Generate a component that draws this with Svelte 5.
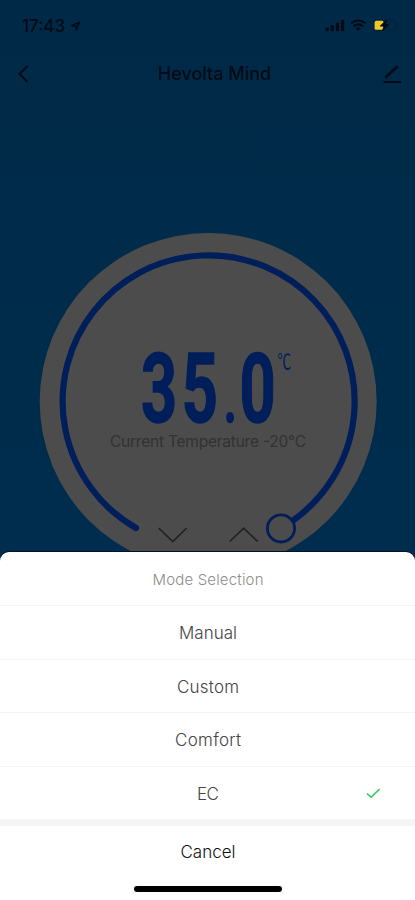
<script>
  const modes = [
    { name: 'Manual', width: 58 },
    { name: 'Custom', width: 62 },
    { name: 'Comfort', width: 66 },
    { name: 'EC', width: 22 }
  ];
  let selected = $state('EC');
</script>

<main class="screen">
  <header class="status">
    <div class="clock">
      <span>17:43</span>
      <svg width="11" height="11" viewBox="0 0 11 11"><path d="M1.5 4.6 9.5 1.2 6.4 9.4 5.6 5.4Z" fill="#010b16" fill-opacity=".4" stroke="#010b16" stroke-width="1.2" stroke-linejoin="round" /></svg>
    </div>
    <svg class="signals" width="76" height="14" viewBox="0 0 76 14">
      <g fill="#010b16">
        <rect x="0.5" y="8.5" width="3.2" height="3.8" rx="1" />
        <rect x="5.7" y="6" width="3.2" height="6.3" rx="1" />
        <rect x="10.9" y="3.5" width="3.2" height="8.8" rx="1" />
        <rect x="16" y="0.8" width="3.2" height="11.5" rx="1" />
        <path d="M30.6 9.2q2.6-2 5.2 0l-2.6 2.9Z" />
      </g>
      <path d="M26 4.5q7.3-6 14.6 0M28.4 7.3q4.8-3.8 9.6 0" fill="none" stroke="#010b16" stroke-width="2" />
      <rect x="48.6" y="1" width="22" height="10.6" rx="3" fill="none" stroke="#03213a" />
      <path d="M72.5 4.2q2 2 0 4" fill="none" stroke="#03213a" />
      <rect x="49.6" y="1.8" width="9" height="9" rx="1.6" fill="#f0c928" />
      <path d="m61.7 1-6.4 6h3.8l-1.5 4.6 6.4-6h-3.8Z" fill="#010b16" stroke="#010b16" />
    </svg>
  </header>

  <nav class="bar">
    <svg width="12" height="20" viewBox="0 0 12 20"><path d="m10.5 2-8 8 8 8" fill="none" stroke="#010b16" stroke-width="2" /></svg>
    <h1>Hevolta Mind</h1>
    <svg width="20" height="20" viewBox="0 0 20 20"><path d="M3.2 13.7 15.7 2.2" stroke="#010b16" stroke-width="2.8" /><path d="M1.5 18h17.5" stroke="#010b16" stroke-width="2" /></svg>
  </nav>

  <section class="dial">
    <svg width="415" height="452" viewBox="0 100 415 452">
      <circle cx="208.2" cy="401.5" r="168.5" fill="#4c4c4c" />
      <path d="M136 528A146 146 0 1 1 293 520.5" fill="none" stroke="#001e5a" stroke-width="6.2" stroke-linecap="round" />
      <circle cx="281" cy="528.4" r="13.6" fill="#4c4c4c" stroke="#001e5a" stroke-width="2.8" />
      <text class="value" transform="translate(0 422) scale(.65 1)" x="216.8 279.8 344.5 368.5">35<tspan class="point">.</tspan>0</text>
      <text class="unit" transform="translate(277.5 369) scale(.65 1)">℃</text>
      <text class="current" x="208" y="447" text-anchor="middle" textLength="196">Current Temperature -20°C</text>
      <path d="m158.7 528 14 13.5L186.7 528M229.7 541.5l14-13.3 14 13.3" fill="none" stroke="#222" stroke-width="1.7" />
    </svg>
  </section>

  <section class="sheet">
    <h2><svg width="120" height="24"><text x="60" y="17.5" text-anchor="middle" textLength="111">Mode Selection</text></svg></h2>
    {#each modes as mode}
      <button class="row" onclick={() => (selected = mode.name)}>
        <svg width="80" height="24"><text x="40" y="18.5" text-anchor="middle" textLength={mode.width}>{mode.name}</text></svg>
        {#if selected === mode.name}
          <svg class="check" width="15" height="12" viewBox="0 0 15 12"><path d="m1 5.6 4.2 3.6L13.5 1.2" fill="none" stroke="#3dcc62" stroke-width="1.6" /></svg>
        {/if}
      </button>
    {/each}
    <div class="gap"></div>
    <button class="cancel"><svg width="80" height="24"><text x="40" y="18" text-anchor="middle" textLength="55">Cancel</text></svg></button>
    <div class="home"></div>
  </section>
</main>

<style>
  :global(body) { margin: 0; }
  .screen {
    width: 415px;
    height: 900px;
    overflow: hidden;
    display: flex;
    flex-direction: column;
    font-family: Inter, "Liberation Sans", sans-serif;
    background: linear-gradient(#002947, #002c4b 350px, #002d4e 552px);
  }
  svg { display: block; flex: none; }
  .status {
    height: 52px;
    box-sizing: border-box;
    padding: 0 14px 0 22px;
    display: flex;
    align-items: center;
    justify-content: space-between;
    color: #010b16;
  }
  .clock { display: flex; align-items: center; gap: 5px; font-size: 17px; font-weight: 500; }
  .bar {
    height: 48px;
    box-sizing: border-box;
    padding: 0 13px 4px 17px;
    display: flex;
    align-items: center;
    justify-content: space-between;
    color: #010b16;
  }
  h1 { margin: 0 0 2px 18px; font-size: 18px; font-weight: 500; }
  .dial { height: 452px; }
  .value { font: 700 97px Roboto, sans-serif; fill: #001e5a; stroke: #001e5a; stroke-width: 1.5px; }
  .point { font-size: 66px; }
  .unit { font: 400 21px "Noto Sans CJK SC", sans-serif; fill: #001e5a; }
  .current { font: 400 15.5px Inter, sans-serif; fill: #323232; }
  .sheet {
    height: 348px;
    display: flex;
    flex-direction: column;
    background: #fff;
    border-radius: 9px 9px 0 0;
    box-shadow: 0 -1px #001326;
  }
  h2 {
    height: 53px;
    margin: 0;
    display: flex;
    align-items: center;
    justify-content: center;
    font-size: 15px;
    font-weight: 300;
    fill: #8d8d8d;
  }
  button {
    border: 0;
    padding: 0;
    background: none;
    font: 300 17px Inter, "Liberation Sans", sans-serif;
    display: flex;
    align-items: center;
    justify-content: center;
  }
  .row {
    height: 53.5px;
    position: relative;
    border-top: 1px solid #f4f4f4;
    fill: #444;
  }
  .check { position: absolute; right: 34.5px; top: 21px; }
  .gap { height: 7px; background: #f5f5f5; }
  .cancel { height: 52px; fill: #111; }
  .home { width: 148px; height: 5.6px; margin: 8px auto 0; border-radius: 3px; background: #000; }
</style>
